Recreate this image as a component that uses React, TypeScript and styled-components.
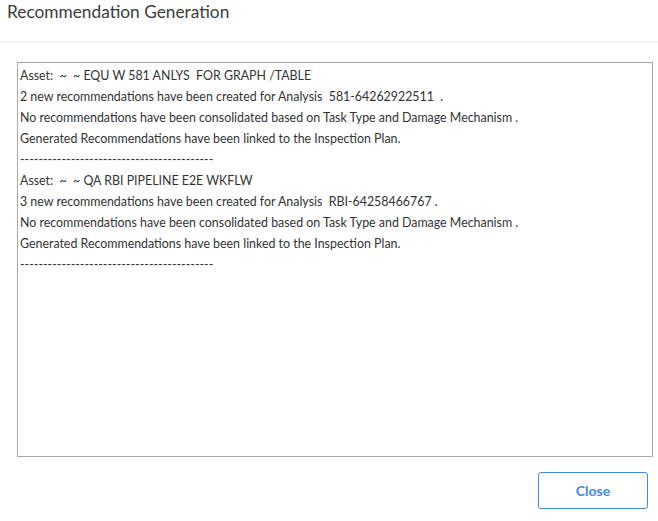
import React from "react";
import styled, { createGlobalStyle } from "styled-components";

const GlobalStyle = createGlobalStyle`
  html, body {
    margin: 0;
    padding: 0;
    background: #ffffff;
  }
  body {
    font-family: Lato, "Open Sans", sans-serif;
  }
`;

const Dialog = styled.div`
  width: 658px;
  height: 521px;
  display: flex;
  flex-direction: column;
  background: #fff;
  box-sizing: border-box;
`;

const Header = styled.div`
  height: 42px;
  box-sizing: border-box;
  padding: 2px 7px 0;
  border-bottom: 1px solid #ebebeb;
`;

const Title = styled.h1`
  margin: 0;
  font-family: Lato, sans-serif;
  font-weight: 400;
  font-size: 17.3px;
  line-height: 20px;
  color: #3c3c3c;
`;

const Body = styled.div`
  padding: 20px 5px 0 17px;
`;

const Output = styled.div`
  height: 395px;
  box-sizing: border-box;
  border: 1px solid #a9a9a9;
  padding: 2px 2px;
  font-family: Lato, sans-serif;
  font-size: 12.4px;
  line-height: 21px;
  color: #333;
  white-space: pre;
  overflow: hidden;
`;

const Line = styled.div`
  height: 21px;
`;

const Footer = styled.div`
  display: flex;
  justify-content: flex-end;
  padding: 15px 10px 0 0;
`;

const Button = styled.button`
  width: 110px;
  height: 37px;
  box-sizing: border-box;
  border: 1px solid #3f8ae2;
  border-radius: 3px;
  background: #fff;
  color: #3f8ae2;
  font-family: Lato, sans-serif;
  font-weight: 700;
  font-size: 14px;
  cursor: pointer;
`;

const sep = "------------------------------------------";

const lines = [
  "Asset:  ~  ~ EQU W 581 ANLYS  FOR GRAPH /TABLE",
  "2 new recommendations have been created for Analysis  581-64262922511  .",
  "No recommendations have been consolidated based on Task Type and Damage Mechanism .",
  "Generated Recommendations have been linked to the Inspection Plan.",
  sep,
  "Asset:  ~  ~ QA RBI PIPELINE E2E WKFLW",
  "3 new recommendations have been created for Analysis  RBI-64258466767 .",
  "No recommendations have been consolidated based on Task Type and Damage Mechanism .",
  "Generated Recommendations have been linked to the Inspection Plan.",
  sep,
];

export default function App() {
  return (
    <>
      <GlobalStyle />
      <Dialog>
        <Header>
          <Title>Recommendation Generation</Title>
        </Header>
        <Body>
          <Output>
            {lines.map((l, i) => (
              <Line key={i}>{l}</Line>
            ))}
          </Output>
        </Body>
        <Footer>
          <Button>Close</Button>
        </Footer>
      </Dialog>
    </>
  );
}
